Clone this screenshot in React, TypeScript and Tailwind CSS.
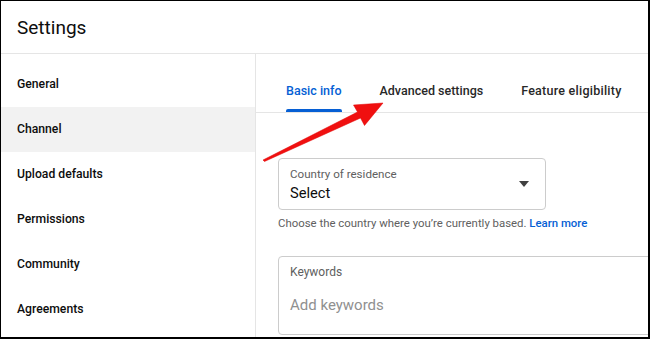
import React from "react";

const navItems = ["General", "Channel", "Upload defaults", "Permissions", "Community", "Agreements"];

export default function App() {
  return (
    <div
      className="relative w-[650px] h-[339px] overflow-hidden bg-white border-l border-t border-r-2 border-b-2 border-black"
      style={{ fontFamily: "Roboto, 'Noto Sans', Arial, sans-serif" }}
    >
      <div className="h-[53px] flex items-center pl-[16px] border-b border-[#e5e5e5]">
        <span className="text-[19px] leading-none text-[#0d0d0d] font-normal">Settings</span>
      </div>
      <div className="flex h-[286px]">
        <div className="w-[255px] shrink-0 border-r border-[#e5e5e5] pt-[8px]">
          {navItems.map((n) => (
            <div
              key={n}
              className={`h-[45px] flex items-center pl-[16px] text-[12.2px] font-medium text-[#0d0d0d] ${
                n === "Channel" ? "bg-[#f2f2f2]" : ""
              }`}
            >
              {n}
            </div>
          ))}
        </div>
        <div className="flex-1 min-w-0">
          <div className="h-[59px] flex items-end gap-[38px] pl-[30px] border-b border-[#e5e5e5]">
            <div className="relative h-full flex items-center pt-[16px] text-[12.5px] font-medium text-[#065fd4]">
              Basic info
              <div className="absolute left-0 right-0 bottom-0 h-[3px] bg-[#065fd4] rounded-t-[2px]" />
            </div>
            <div className="h-full flex items-center pt-[16px] text-[12.5px] font-medium text-[#282828]">
              Advanced settings
            </div>
            <div className="h-full flex items-center pt-[16px] text-[12.5px] font-medium tracking-[0.25px] text-[#282828]">
              Feature eligibility
            </div>
          </div>
          <div className="pl-[22px] pt-[45px]">
            <div className="w-[268px] h-[52px] rounded-[4px] border border-[#cccccc] flex items-center justify-between pl-[11px] pr-[15px]">
              <div className="flex flex-col pt-[2px]">
                <span className="text-[11.6px] leading-[14px] text-[#606060]">Country of residence</span>
                <span className="text-[14.7px] leading-[20px] text-[#0d0d0d] mt-[2px]">Select</span>
              </div>
              <svg width="12" height="6" viewBox="0 0 12 6">
                <path d="M1 0 L11 0 L6 6 Z" fill="#404040" />
              </svg>
            </div>
            <div className="mt-[5px] text-[11.4px] leading-[16px] text-[#606060]">
              Choose the country where you’re currently based.{" "}
              <span className="text-[#065fd4] font-medium">Learn more</span>
            </div>
            <div className="mt-[25px] w-[400px] h-[79px] rounded-[4px] border border-[#cccccc] pl-[11px] pt-[8px]">
              <div className="text-[12px] leading-[14px] text-[#606060]">Keywords</div>
              <div className="mt-[16px] text-[15px] leading-[20px] text-[#909090]">Add keywords</div>
            </div>
          </div>
        </div>
      </div>
      <svg className="absolute left-0 top-0 pointer-events-none" width="650" height="339" viewBox="0 0 650 339">
        <polygon
          points="262,159 356.5,111 352.5,104 382,102 363.5,124.5 359.5,117 263.5,160.5"
          fill="#f01010"
          stroke="#e00000"
          strokeWidth="0.5"
          strokeLinejoin="round"
        />
      </svg>
    </div>
  );
}
